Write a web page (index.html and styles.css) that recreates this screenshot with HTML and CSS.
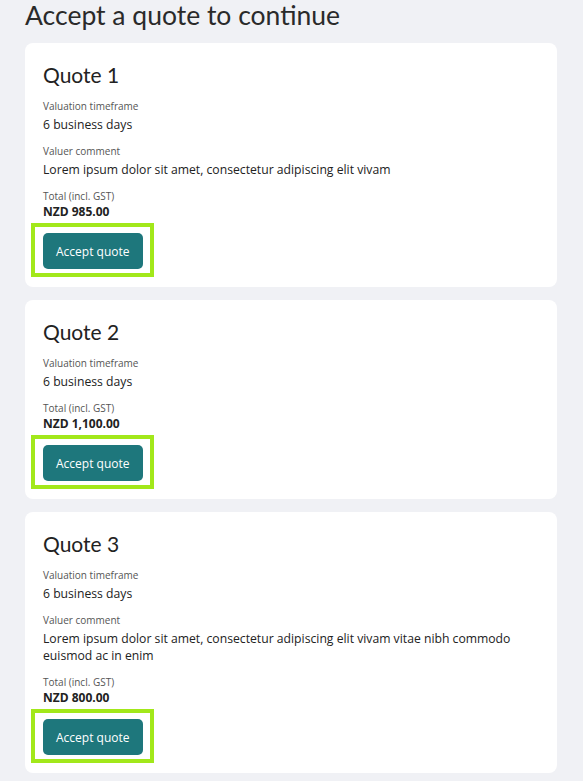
FILE: index.html
```html
<!DOCTYPE html>
<html lang="en">
<head>
    <meta charset="UTF-8">
    <title>Accept a quote</title>
    <link rel="stylesheet" href="styles.css">
</head>
<body>
    <main class="page">
        <h1 class="page-title">Accept a quote to continue</h1>

        <section class="quote-card">
            <h2 class="quote-title">Quote 1</h2>
            <div class="field">
                <div class="field-label">Valuation timeframe</div>
                <div class="field-value">6 business days</div>
            </div>
            <div class="field">
                <div class="field-label">Valuer comment</div>
                <div class="field-value">Lorem ipsum dolor sit amet, consectetur adipiscing elit vivam</div>
            </div>
            <div class="field">
                <div class="field-label">Total (incl. GST)</div>
                <div class="field-total">NZD 985.00</div>
            </div>
            <div class="actions">
                <button type="button" class="accept-btn">Accept quote</button>
            </div>
        </section>

        <section class="quote-card">
            <h2 class="quote-title">Quote 2</h2>
            <div class="field">
                <div class="field-label">Valuation timeframe</div>
                <div class="field-value">6 business days</div>
            </div>
            <div class="field">
                <div class="field-label">Total (incl. GST)</div>
                <div class="field-total">NZD 1,100.00</div>
            </div>
            <div class="actions">
                <button type="button" class="accept-btn">Accept quote</button>
            </div>
        </section>

        <section class="quote-card">
            <h2 class="quote-title">Quote 3</h2>
            <div class="field">
                <div class="field-label">Valuation timeframe</div>
                <div class="field-value">6 business days</div>
            </div>
            <div class="field">
                <div class="field-label">Valuer comment</div>
                <div class="field-value">Lorem ipsum dolor sit amet, consectetur adipiscing elit vivam vitae nibh commodo euismod ac in enim</div>
            </div>
            <div class="field">
                <div class="field-label">Total (incl. GST)</div>
                <div class="field-total">NZD 800.00</div>
            </div>
            <div class="actions">
                <button type="button" class="accept-btn">Accept quote</button>
            </div>
        </section>
    </main>
</body>
</html>
```

FILE: styles.css
```css
body {
    font-family: "Open Sans", "Liberation Sans", sans-serif;
    margin: 0;
    padding: 0;
    background: #f0f1f5;
    color: #222;
}
.page {
    padding: 0 26px 0 25px;
}
.page-title {
    font-family: Lato, "Open Sans", sans-serif;
    font-weight: 400;
    font-size: 26.5px;
    line-height: 30px;
    margin: 0 0 13px;
    color: #2a2a2a;
}
.quote-card {
    background: #fff;
    border-radius: 8px;
    padding: 18px 18px 18px;
    margin-bottom: 13px;
}
.quote-title {
    font-family: Lato, "Open Sans", sans-serif;
    font-weight: 400;
    font-size: 21px;
    line-height: 28px;
    margin: 0 0 10px;
    color: #222;
}
.field {
    margin-bottom: 11px;
}
.field:last-of-type {
    margin-bottom: 0;
}
.field-label {
    font-size: 10px;
    line-height: 15px;
    color: #555;
    margin-bottom: 2px;
}
.field-value {
    font-size: 12.2px;
    line-height: 17px;
    color: #222;
}
.field-total {
    font-size: 12px;
    line-height: 16px;
    font-weight: 700;
    color: #222;
    margin-top: -2px;
}
.actions {
    margin-top: 13px;
}
.accept-btn {
    position: relative;
    font-family: "Open Sans", sans-serif;
    font-size: 12px;
    background-color: #1e777c;
    color: #fff;
    height: 36px;
    padding: 0 13px;
    border: none;
    border-radius: 5px;
    cursor: pointer;
}
/* review highlight drawn round each button */
.accept-btn::after {
    content: "";
    position: absolute;
    top: -10px;
    bottom: -8px;
    left: -12px;
    right: -11px;
    border: 4px solid #a2e81a;
    pointer-events: none;
}
```
